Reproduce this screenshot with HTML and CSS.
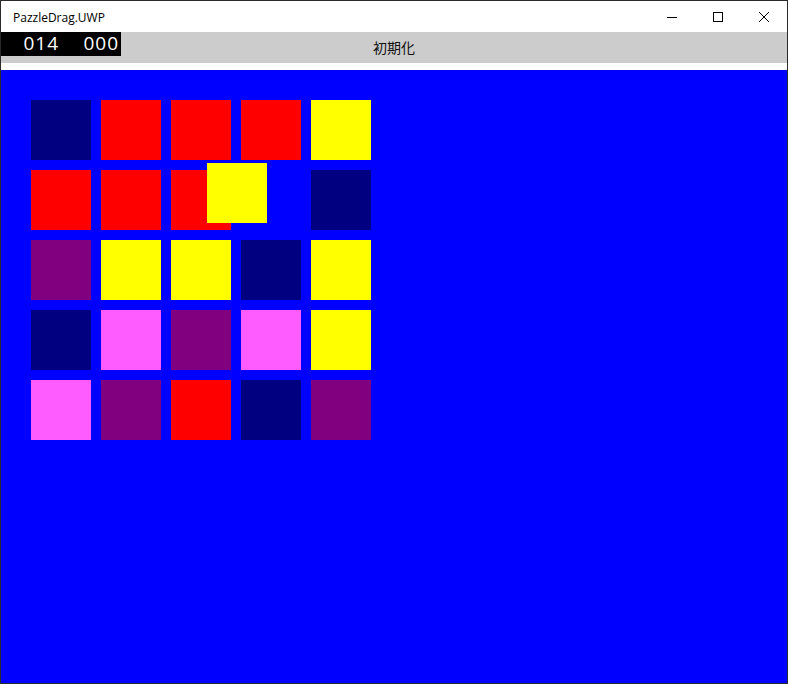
FILE: index.html
```html
<!DOCTYPE html>
<html lang="ja">
<head>
<meta charset="utf-8">
<title>PazzleDrag.UWP</title>
<link rel="stylesheet" href="styles.css">
</head>
<body>
<div class="window">
  <div class="titlebar">
    <span class="title">PazzleDrag.UWP</span>
    <div class="controls">
      <div class="ctl"><svg width="10" height="10" viewBox="0 0 10 10"><line x1="0" y1="5.5" x2="10" y2="5.5" stroke="#000" stroke-width="1"/></svg></div>
      <div class="ctl"><svg width="10" height="10" viewBox="0 0 10 10"><rect x="0.5" y="0.5" width="9" height="9" fill="none" stroke="#000" stroke-width="1"/></svg></div>
      <div class="ctl"><svg width="10" height="10" viewBox="0 0 10 10"><path d="M0 0L10 10M10 0L0 10" stroke="#000" stroke-width="1"/></svg></div>
    </div>
  </div>
  <div class="toolbar">
    <button class="reset">初期化</button>
    <div class="score">
      <span class="num">014</span>
      <span class="num">000</span>
    </div>
  </div>
  <div class="spacer"></div>
  <div class="board">
    <div class="grid">
      <div class="tile navy"></div>
      <div class="tile red"></div>
      <div class="tile red"></div>
      <div class="tile red"></div>
      <div class="tile yellow"></div>

      <div class="tile red"></div>
      <div class="tile red"></div>
      <div class="tile red"></div>
      <div class="tile empty"></div>
      <div class="tile navy"></div>

      <div class="tile purple"></div>
      <div class="tile yellow"></div>
      <div class="tile yellow"></div>
      <div class="tile navy"></div>
      <div class="tile yellow"></div>

      <div class="tile navy"></div>
      <div class="tile pink"></div>
      <div class="tile purple"></div>
      <div class="tile pink"></div>
      <div class="tile yellow"></div>

      <div class="tile pink"></div>
      <div class="tile purple"></div>
      <div class="tile red"></div>
      <div class="tile navy"></div>
      <div class="tile purple"></div>
    </div>
    <div class="tile yellow dragging"></div>
  </div>
</div>
</body>
</html>
```
FILE: styles.css
```css
html, body {
  margin: 0;
  padding: 0;
  background: #ffffff;
}

.window {
  width: 788px;
  height: 684px;
  box-sizing: border-box;
  border: 1px solid #2b2b2b;
  display: flex;
  flex-direction: column;
  overflow: hidden;
}

.titlebar {
  height: 31px;
  flex: none;
  display: flex;
  align-items: center;
  justify-content: space-between;
  background: #ffffff;
}

.title {
  font-family: "Open Sans", "Noto Sans", sans-serif;
  font-size: 12px;
  color: #000;
  padding-left: 12px;
  padding-top: 1px;
}

.controls {
  display: flex;
  height: 100%;
}

.ctl {
  width: 46px;
  height: 100%;
  display: flex;
  align-items: center;
  justify-content: center;
}

.ctl svg {
  display: block;
  shape-rendering: crispEdges;
}

.toolbar {
  height: 31px;
  flex: none;
  position: relative;
  background: #cccccc;
}

.reset {
  display: block;
  width: 100%;
  height: 100%;
  margin: 0;
  padding: 0 0 2px 0;
  border: none;
  background: #cccccc;
  font-family: "Noto Sans CJK JP", "Noto Sans", sans-serif;
  font-size: 14px;
  color: #111;
}

.score {
  position: absolute;
  left: 0;
  top: 0;
  height: 24px;
  background: #000000;
  display: flex;
}

.num {
  width: 60px;
  box-sizing: border-box;
  padding-right: 2px;
  text-align: right;
  font-family: "Open Sans", "Noto Sans", sans-serif;
  font-size: 19px;
  letter-spacing: 1px;
  line-height: 23px;
  color: #ffffff;
}

.spacer {
  height: 7px;
  flex: none;
  background: #ffffff;
}

.board {
  flex: 1;
  position: relative;
  background: #0000ff;
  padding: 30px 0 0 30px;
}

.grid {
  display: grid;
  grid-template-columns: repeat(5, 60px);
  grid-auto-rows: 60px;
  gap: 10px;
}

.tile {
  width: 60px;
  height: 60px;
}

.navy { background: #000080; }
.red { background: #ff0000; }
.yellow { background: #ffff00; }
.purple { background: #800080; }
.pink { background: #ff5cff; }
.empty { background: transparent; }

.dragging {
  position: absolute;
  left: 206px;
  top: 93px;
}
```
